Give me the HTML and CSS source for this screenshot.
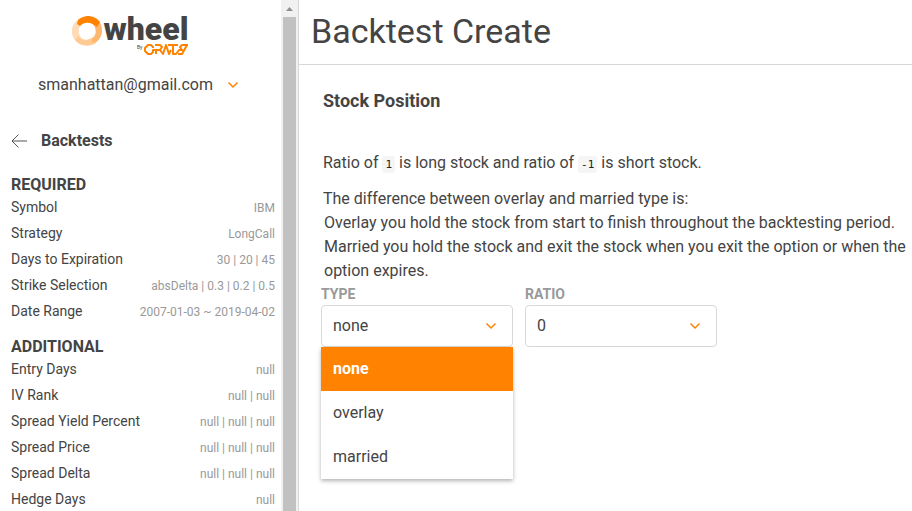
FILE: index.html
```html
<!DOCTYPE html>
<html lang="en">
<head>
<meta charset="utf-8">
<title>Backtest Create</title>
<link rel="stylesheet" href="styles.css">
</head>
<body>
<div class="app">
  <aside class="sidebar">
    <div class="sidebar-content">
      <a class="logo" href="#" aria-label="Wheel by ORATS">
        <svg class="logo-ring" viewBox="0 0 30 30" aria-hidden="true">
          <path fill="#ffdcb8" d="M7 3C-2 8-2 20 4 25L6 21L10 23C6 18 6 12 9 9L6 8Z"/>
          <path fill="#ffca94" d="M3 24C8 31 18 31 24 27L20 25L22 20C17 25 11 25 6 20Z"/>
          <path fill="#ffb66e" d="M23 27C31 22 32 12 27 5L25 9L20 7C25 13 25 18 20 23L20 26Z"/>
          <path fill="#ff8300" d="M6 4C14-3 24 0 28 6L25 11C19 6 13 5 8 10L5 8Z"/>
        </svg>
        <span class="logo-text">
          <span class="logo-name">wheel</span>
          <span class="logo-by"><small>By</small>
            <svg viewBox="0 0 44 11" aria-hidden="true"><path fill="none" stroke="#ff8300" stroke-width="2" stroke-linejoin="round" d="M9 4V3L7 1H4L1 4V7L4 10H7L9 8V6H17M11 1H16L18 3L16 6M12 6V10M16 6L19 10L22 1L25 10L27 6M24 1H34M29 1V10H32L35 6H38L36 3L38 1H44M34 10H38L43 1"/></svg>
          </span>
        </span>
      </a>
      <button class="account" type="button">smanhattan@gmail.com
        <svg class="chevron" viewBox="0 0 12 8" aria-hidden="true"><path d="M1.500 1.500L6 6L10.500 1.500"/></svg>
      </button>
      <a class="back" href="#">
        <svg viewBox="0 0 16 14" aria-hidden="true"><path d="M16 7H1M7.500 .5L1 7L7.500 13.500"/></svg>
        Backtests
      </a>
      <section class="summary">
        <h2>REQUIRED</h2>
        <dl>
          <div><dt>Symbol</dt><dd>IBM</dd></div>
          <div><dt>Strategy</dt><dd>LongCall</dd></div>
          <div><dt>Days to Expiration</dt><dd>30 | 20 | 45</dd></div>
          <div><dt>Strike Selection</dt><dd>absDelta | 0.3 | 0.2 | 0.5</dd></div>
          <div><dt>Date Range</dt><dd>2007-01-03 ~ 2019-04-02</dd></div>
        </dl>
      </section>
      <section class="summary">
        <h2>ADDITIONAL</h2>
        <dl>
          <div><dt>Entry Days</dt><dd>null</dd></div>
          <div><dt>IV Rank</dt><dd>null | null</dd></div>
          <div><dt>Spread Yield Percent</dt><dd>null | null | null</dd></div>
          <div><dt>Spread Price</dt><dd>null | null | null</dd></div>
          <div><dt>Spread Delta</dt><dd>null | null | null</dd></div>
          <div><dt>Hedge Days</dt><dd>null</dd></div>
        </dl>
      </section>
    </div>
    <div class="scrollbar" aria-hidden="true">
      <svg viewBox="0 0 17 17"><path fill="#8f8f8f" d="M5 11L8.500 7L12 11Z"/></svg>
      <div class="thumb"></div>
    </div>
  </aside>
  <main class="main">
    <header class="page-header"><h1>Backtest Create</h1></header>
    <div class="content">
      <h2>Stock Position</h2>
      <p class="ratio-note">Ratio of <code>1</code> is long stock and ratio of <code>-1</code> is short stock.</p>
      <p class="lead">The difference between overlay and married type is:</p>
      <ul>
        <li>Overlay you hold the stock from start to finish throughout the backtesting period.</li>
        <li>Married you hold the stock and exit the stock when you exit the option or when the option expires.</li>
      </ul>
      <form class="fields">
        <div class="field">
          <label for="type">TYPE</label>
          <div class="select">
            <select id="type"><option>none</option><option>overlay</option><option>married</option></select>
            <svg class="chevron" viewBox="0 0 12 8" aria-hidden="true"><path d="M1.500 1.500L6 6L10.500 1.500"/></svg>
            <div class="menu" role="listbox" aria-label="Type">
              <button type="button" role="option" aria-selected="true">none</button>
              <button type="button" role="option" aria-selected="false">overlay</button>
              <button type="button" role="option" aria-selected="false">married</button>
            </div>
          </div>
        </div>
        <div class="field">
          <label for="ratio">RATIO</label>
          <div class="select">
            <select id="ratio"><option>0</option><option>1</option><option>-1</option></select>
            <svg class="chevron" viewBox="0 0 12 8" aria-hidden="true"><path d="M1.500 1.500L6 6L10.500 1.500"/></svg>
          </div>
        </div>
      </form>
    </div>
  </main>
</div>
</body>
</html>
```
FILE: styles.css
```css
* { box-sizing: border-box; }

body {
  margin: 0;
  background: #fff;
  color: #444;
  font: 16px/24px Roboto, "Liberation Sans", sans-serif;
}

h1, h2, p, ul, dl, dd { margin: 0; padding: 0; }
a { color: inherit; text-decoration: none; }
button, select { font: inherit; color: inherit; }
svg { display: block; flex: none; }

.app { display: flex; height: 100vh; overflow: hidden; }

/* Sidebar */
.sidebar {
  display: flex;
  flex: none;
  width: 299px;
  border-right: 1px solid #d8d8d8;
}
.sidebar-content { flex: 1; padding: 13px 6px 0 11px; overflow: hidden; }

.logo { display: flex; justify-content: center; gap: 2px; height: 44px; padding: 2px 26px 0 0; }
.logo-ring { width: 30px; height: 30px; margin-top: 1px; }
.logo-text { display: flex; flex-direction: column; align-items: flex-end; }
.logo-name { font-size: 32px; line-height: 29px; font-weight: 900; }
.logo-by { display: flex; gap: 2px; }
.logo-by small { font-size: 5px; line-height: 6px; }
.logo-by svg { width: 44px; height: 11px; }

.chevron { width: 12px; height: 8px; }
.chevron path { fill: none; stroke: #ff8300; stroke-width: 1.5; }

.account {
  display: flex;
  align-items: center;
  justify-content: center;
  gap: 14px;
  width: 100%;
  margin-top: 16px;
  padding: 0 9px 0 0;
  border: 0;
  background: none;
}

.back { display: flex; align-items: center; gap: 14px; margin-top: 32px; font-weight: 700; }
.back svg { width: 16px; height: 14px; }
.back path { fill: none; stroke: #555; }

.summary { margin-top: 20px; }
.summary + .summary { margin-top: 10px; }
.summary h2 { font-size: 16px; line-height: 24px; font-weight: 700; }
.summary dl { margin-top: -2px; }
.summary dl > div { display: flex; justify-content: space-between; height: 26px; font-size: 14px; line-height: 24px; }
.summary dd { color: #999; font-size: 12px; line-height: 26px; }

.scrollbar { flex: none; width: 17px; background: #f1f1f1; }
.scrollbar svg { width: 17px; height: 17px; }
.thumb { height: 100%; margin: 0 2px; background: #c1c1c1; }

/* Main */
.main { flex: 1; min-width: 0; }
.page-header { padding: 11px 12px 13px; border-bottom: 1px solid #d8d8d8; }
.page-header h1 { font-size: 34px; line-height: 40px; font-weight: 400; }

.content { padding: 24px 0 0 24px; }
.content h2 { font-size: 18px; line-height: 24px; font-weight: 700; }
.ratio-note { margin-top: 38px; }
.lead { margin-top: 12px; }
code {
  padding: 2px 3px;
  border-radius: 3px;
  background: #f5f5f5;
  color: #222;
  font: 11px/16px "DejaVu Sans Mono", monospace;
}
ul { list-style: none; padding-left: 1px; }

.fields { display: flex; gap: 12px; margin-left: -2px; }
.field { width: 192px; }
.field label { display: block; color: #999; font-size: 14px; line-height: 22px; font-weight: 700; }
.select { position: relative; display: flex; align-items: center; }
.select select {
  width: 100%;
  height: 42px;
  padding: 0 11px;
  border: 1px solid #d8d8d8;
  border-radius: 4px;
  background: #fff;
  appearance: none;
}
.select .chevron { position: absolute; right: 16px; }
.menu {
  position: absolute;
  top: 100%;
  left: 0;
  width: 100%;
  background: #fff;
  box-shadow: 0 2px 4px rgba(0, 0, 0, 0.3);
}
.menu button {
  display: block;
  width: 100%;
  height: 44px;
  padding: 0 12px;
  border: 0;
  background: none;
  text-align: left;
}
.menu [aria-selected="true"] { background: #ff8300; color: #fff; font-weight: 700; }
```
